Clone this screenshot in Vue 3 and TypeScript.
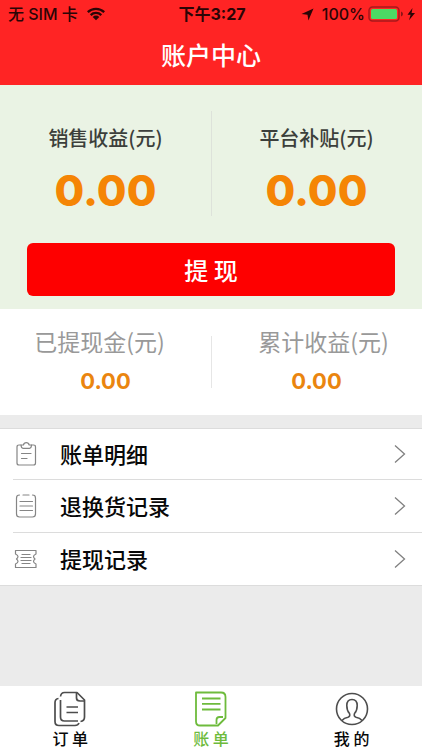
<script setup lang="ts">
interface Amount {
  label: string
  value: string
}

const balances: Amount[] = [
  { label: '销售收益(元)', value: '0.00' },
  { label: '平台补贴(元)', value: '0.00' },
]

const totals: Amount[] = [
  { label: '已提现金(元)', value: '0.00' },
  { label: '累计收益(元)', value: '0.00' },
]

type RowIcon = 'clipboard' | 'sheet' | 'ticket'

const rows: { label: string; icon: RowIcon }[] = [
  { label: '账单明细', icon: 'clipboard' },
  { label: '退换货记录', icon: 'sheet' },
  { label: '提现记录', icon: 'ticket' },
]
</script>

<template>
  <div class="page">
    <header class="top">
      <div class="status">
        <div class="status-side">
          <span>无 SIM 卡</span>
          <svg class="wifi" width="20" height="14" viewBox="0 0 20 14" aria-hidden="true">
            <path d="M1.8 5.2A11.8 11.8 0 0 1 18.2 5.2M4.7 8.1A7.6 7.6 0 0 1 15.3 8.1" fill="none" stroke="currentColor" stroke-width="2.3" />
            <path d="M10 13.2L6.7 9.9A4.7 4.7 0 0 1 13.3 9.9Z" fill="currentColor" />
          </svg>
        </div>
        <div class="clock">下午3:27</div>
        <div class="status-side end">
          <svg width="13" height="13" viewBox="0 0 13 13" aria-hidden="true">
            <path d="M12.5 .5L7.4 12.4L6.5 6.7L.5 5.9Z" fill="currentColor" />
          </svg>
          <span class="percent">100%</span>
          <svg width="48" height="16" viewBox="0 0 48 16" aria-hidden="true">
            <rect x="1" y="1" width="30" height="14" rx="3.5" fill="none" stroke="#a8181b" stroke-width="1.5" />
            <rect x="3" y="3" width="26" height="10" rx="1.5" fill="#4cd964" />
            <path d="M33 5.5Q35 6.2 35 8T33 10.500Z" fill="#8c1417" />
            <path d="M44.500 2L39.500 8.800H42.600L41 14.200L47 7H43.600Z" fill="currentColor" />
          </svg>
        </div>
      </div>
      <h1>账户中心</h1>
    </header>

    <main>
      <section class="balance">
        <div class="columns">
          <div v-for="item in balances" :key="item.label" class="column">
            <div class="label">{{ item.label }}</div>
            <div class="value">{{ item.value }}</div>
          </div>
        </div>
        <button type="button" class="withdraw">提 现</button>
      </section>

      <section class="columns totals">
        <div v-for="item in totals" :key="item.label" class="column">
          <div class="label">{{ item.label }}</div>
          <div class="value">{{ item.value }}</div>
        </div>
      </section>

      <ul class="list">
        <li v-for="row in rows" :key="row.label">
          <a href="#">
            <svg width="24" height="26" viewBox="0 0 24 26" fill="none" stroke="#858585" stroke-width="1.2" stroke-linecap="round" stroke-linejoin="round" aria-hidden="true">
              <template v-if="row.icon === 'clipboard'">
                <path d="M7 4H5Q3 4 3 6V22Q3 24 5 24H19.500Q21.500 24 21.500 22V6Q21.500 4 19.500 4H17.500" />
                <path d="M7 4Q7.300 7.300 9 7.300H15.500Q17.300 7.300 17.500 4H15.200Q14.600 1.600 12.300 1.600T9.400 4Z" />
                <path d="M7.500 12.500H17M7.500 17.500H13" />
              </template>
              <template v-else-if="row.icon === 'sheet'">
                <path d="M5.500 2Q2.500 2 2.500 5V21Q2.500 24 5.500 24H18.500Q21.500 24 21.500 21V5Q21.500 2 18.500 2M9 2H15" />
                <path d="M6 8.500H18.500M6 13H18.500M6 17.500H18.500" />
              </template>
              <template v-else>
                <path d="M1.500 4.500H22V8Q19.500 9.300 19.500 10.500T21 13Q19.500 14.300 19.500 15.500T22 18V21.500H1.500V18Q4 16.700 4 15.500T2.500 13Q4 11.700 4 10.500T1.500 8Z" />
                <path d="M8 8.500H16M7 11.500H17M7 14.500H17M8 17.500H16" />
              </template>
            </svg>
            <span class="row-label">{{ row.label }}</span>
            <svg width="12" height="20" viewBox="0 0 12 20" fill="none" stroke="#808080" stroke-width="1.3" aria-hidden="true">
              <path d="M1 1.500L10.500 10L1 18.500" />
            </svg>
          </a>
        </li>
      </ul>
    </main>

    <nav class="tabs">
      <a href="#">
        <svg width="34" height="36" viewBox="0 0 34 36" fill="none" stroke="#4d4d4d" stroke-width="1.7" stroke-linejoin="round" aria-hidden="true">
          <path d="M5.500 7.500Q2 8 2 11.500V30.500Q2 34.500 6 34.500H22Q25 34.500 26 32" />
          <path d="M7.500 5.500Q8 1.500 11.500 1.500H24L31.500 9V26Q31.500 30 27.500 30.500" />
          <path d="M7.500 9V26Q7.500 30 11.500 30H25" />
          <path d="M23.500 2V7Q23.500 10 27 10H31" />
          <path d="M13.500 16H25M13.500 21.500H25" />
        </svg>
        <span>订 单</span>
      </a>
      <a href="#" class="active" aria-current="page">
        <svg width="34" height="36" viewBox="0 0 34 36" fill="none" stroke="#6ebb3c" stroke-width="1.8" stroke-linejoin="round" aria-hidden="true">
          <path d="M2 1.500H27Q31.500 1.500 31.500 6V27L24 34.500H6Q2 34.500 2 30.500Z" />
          <path d="M22.500 33V29Q22.500 26 25.500 26H29" />
          <path d="M8 7.500H26.500M8 12.800H26.500M8 18.500H26.500" />
        </svg>
        <span>账 单</span>
      </a>
      <a href="#">
        <svg width="34" height="36" viewBox="0 0 34 36" fill="none" stroke="#4d4d4d" stroke-width="1.6" stroke-linejoin="round" aria-hidden="true">
          <circle cx="17" cy="18" r="15.500" />
          <path d="M7 29.500Q9 27 13 26.200Q15.500 25.500 14.500 22.500Q11.800 19.800 11.800 14.500Q11.800 8.500 17 8.500T22.200 14.500Q22.200 19.800 19.500 22.500Q18.500 25.500 21 26.200Q25 27 27 29.500" />
        </svg>
        <span>我 的</span>
      </a>
    </nav>
  </div>
</template>

<style>
body {
  margin: 0;
  background: #ebebeb;
}
</style>

<style scoped>
.page {
  display: flex;
  flex-direction: column;
  min-height: 100vh;
  background: #ebebeb;
  color: #080808;
  font-family: "Noto Sans CJK SC", sans-serif;
  font-weight: 500;
}

.top {
  background: #ff2424;
  padding-bottom: 13px;
}

.status {
  display: flex;
  align-items: center;
  height: 28px;
  padding: 0 6px 0 8px;
  color: #2b0506;
  font-family: Inter, "Noto Sans CJK SC", sans-serif;
  font-size: 16px;
  line-height: 28px;
}

.status-side {
  display: flex;
  flex: 1;
  align-items: center;
  gap: 8px;
  white-space: nowrap;
}

.end {
  justify-content: flex-end;
}

.percent {
  margin-right: -5px;
}

.clock {
  font-weight: 700;
}

h1 {
  margin: 0;
  padding-top: 8px;
  color: #fff;
  font-size: 25px;
  font-weight: 500;
  line-height: 36px;
  text-align: center;
}

.balance {
  background: #eaf3e4;
  padding: 26px 27px 13px;
}

.columns {
  display: grid;
  grid-template-columns: 1fr 1fr;
}

.column {
  text-align: center;
  white-space: nowrap;
}

.column + .column {
  padding-right: 1px;
  border-left: 1px solid #dde2da;
}

.balance .columns {
  margin: 0 -27px 27px;
}

.balance .label {
  padding-top: 12px;
  color: #3c3f3b;
  font-size: 20px;
  line-height: 30px;
}

.balance .value {
  padding-top: 12px;
  color: #f58505;
  font-family: Inter, sans-serif;
  font-size: 43px;
  font-weight: 800;
  line-height: 51px;
}

.withdraw {
  display: block;
  width: 100%;
  height: 53px;
  padding: 0;
  border: 0;
  border-radius: 6px;
  background: #fe0000;
  color: #fff;
  font: inherit;
  font-size: 24px;
}

.totals {
  background: #fff;
  padding: 27px 0;
  margin-bottom: 13px;
}

.totals .column {
  height: 52px;
  border-color: #e6e6e6;
}

.totals .label {
  margin-top: -12px;
  color: #999;
  font-size: 23px;
  font-weight: 400;
  line-height: 34px;
}

.totals .column:first-child .label {
  padding-right: 12px;
}

.totals .column:last-child .label {
  padding-left: 14px;
}

.totals .value {
  padding-top: 9px;
  color: #ea850f;
  font-family: Inter, sans-serif;
  font-size: 22px;
  font-weight: 700;
  line-height: 28px;
}

.list {
  margin: 0;
  padding: 0 0 0 13px;
  border: solid #dcdcdc;
  border-width: 1px 0;
  background: #fff;
  list-style: none;
}

.list li + li {
  border-top: 1px solid #dcdcdc;
}

.list a {
  display: flex;
  align-items: center;
  height: 52px;
  padding: 0 16px 0 1px;
  color: inherit;
  text-decoration: none;
}

.list li:first-child a {
  height: 50px;
}

.row-label {
  flex: 1;
  padding: 0 0 2px 22px;
  font-size: 22px;
}

.tabs {
  display: grid;
  grid-template-columns: repeat(3, 1fr);
  margin-top: auto;
  background: #fff;
}

.tabs a {
  display: flex;
  flex-direction: column;
  align-items: center;
  padding-top: 5px;
  color: inherit;
  font-size: 16px;
  line-height: 23px;
  text-decoration: none;
}

.tabs svg {
  flex: none;
}

.tabs .active {
  color: #6ebb3c;
}
</style>
